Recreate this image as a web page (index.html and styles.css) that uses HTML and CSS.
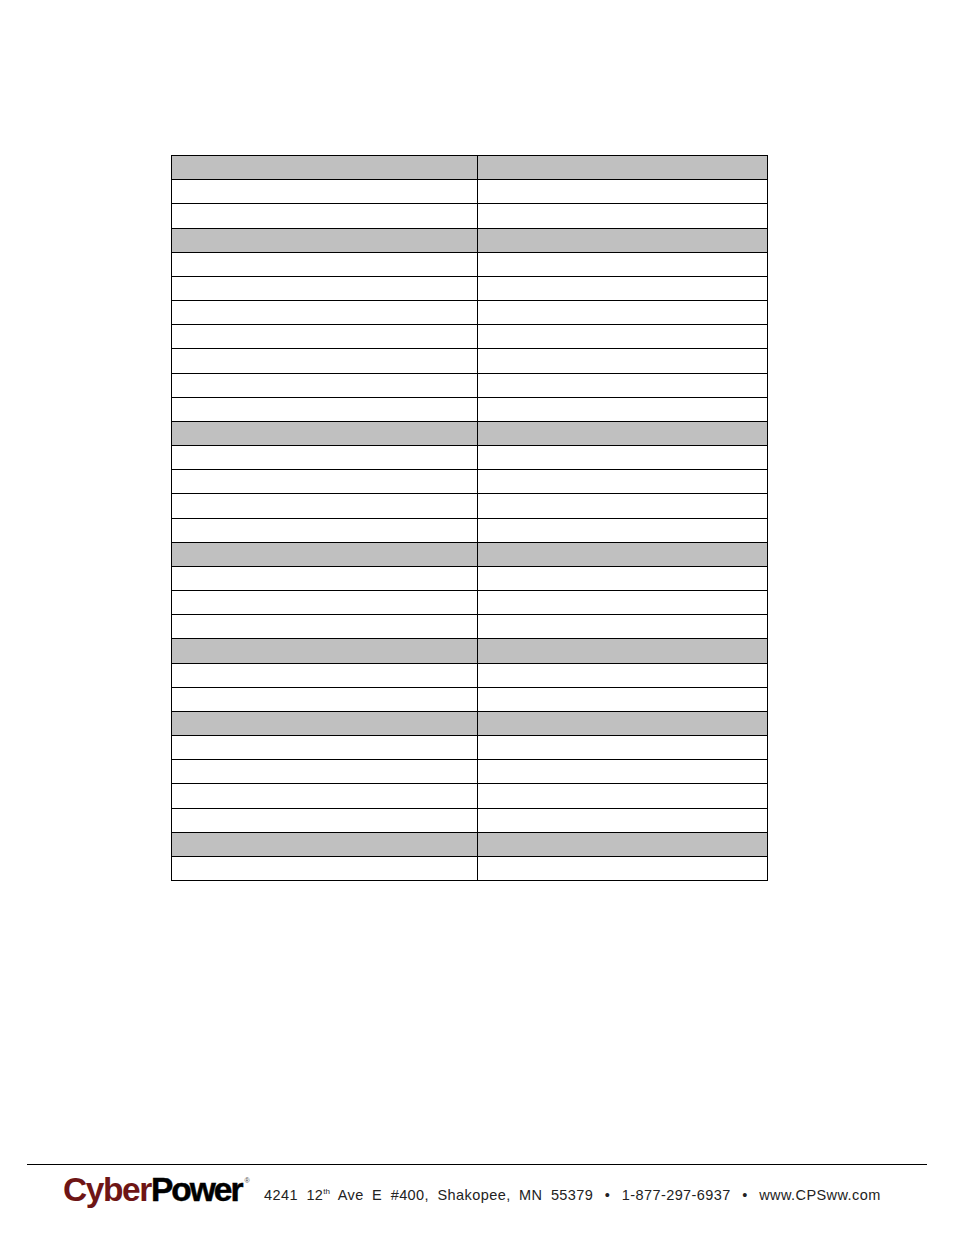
FILE: index.html
```
<!DOCTYPE html>
<html>
<head>
<meta charset="utf-8">
<link rel="stylesheet" href="styles.css">
</head>
<body>
<div class="page">
  <div class="spec-table">
    <div class="cell head"></div><div class="cell head"></div>
    <div class="cell"></div><div class="cell"></div>
    <div class="cell"></div><div class="cell"></div>
    <div class="cell head"></div><div class="cell head"></div>
    <div class="cell"></div><div class="cell"></div>
    <div class="cell"></div><div class="cell"></div>
    <div class="cell"></div><div class="cell"></div>
    <div class="cell"></div><div class="cell"></div>
    <div class="cell"></div><div class="cell"></div>
    <div class="cell"></div><div class="cell"></div>
    <div class="cell"></div><div class="cell"></div>
    <div class="cell head"></div><div class="cell head"></div>
    <div class="cell"></div><div class="cell"></div>
    <div class="cell"></div><div class="cell"></div>
    <div class="cell"></div><div class="cell"></div>
    <div class="cell"></div><div class="cell"></div>
    <div class="cell head"></div><div class="cell head"></div>
    <div class="cell"></div><div class="cell"></div>
    <div class="cell"></div><div class="cell"></div>
    <div class="cell"></div><div class="cell"></div>
    <div class="cell head"></div><div class="cell head"></div>
    <div class="cell"></div><div class="cell"></div>
    <div class="cell"></div><div class="cell"></div>
    <div class="cell head"></div><div class="cell head"></div>
    <div class="cell"></div><div class="cell"></div>
    <div class="cell"></div><div class="cell"></div>
    <div class="cell"></div><div class="cell"></div>
    <div class="cell"></div><div class="cell"></div>
    <div class="cell head"></div><div class="cell head"></div>
    <div class="cell"></div><div class="cell"></div>
  </div>

  <footer class="footer">
    <div class="rule"></div>
    <div class="footer-row">
      <div class="logo"><span class="cyber">Cyber</span><span class="power">Power</span><span class="reg">®</span></div>
      <div class="address">4241 12<sup>th</sup> Ave E #400, Shakopee, MN 55379 <span class="dot">•</span> 1-877-297-6937 <span class="dot">•</span> www.CPSww.com</div>
    </div>
  </footer>
</div>
</body>
</html>
```

FILE: styles.css
```
html, body {
  margin: 0;
  padding: 0;
  background: #fff;
}

.page {
  width: 954px;
  height: 1235px;
  font-family: "Liberation Sans", Arial, sans-serif;
}

.page::before {
  content: "";
  display: block;
  height: 0.1px;
}

.spec-table {
  margin-left: 171px;
  margin-top: 155px;
  width: 597px;
  height: 726px;
  box-sizing: border-box;
  display: grid;
  grid-template-columns: 305px 1fr;
  grid-template-rows: repeat(30, 1fr);
  gap: 1px;
  padding: 1px;
  background: #000;
}

.cell {
  background: #fff;
}

.cell.head {
  background: #c0c0c0;
}

.footer {
  margin-top: 283px;
}

.rule {
  margin-left: 27px;
  width: 900px;
  height: 1px;
  background: #000;
}

.footer-row {
  display: flex;
  align-items: baseline;
  padding-left: 63px;
  margin-top: -4px;
}

.logo {
  font-size: 33.5px;
  line-height: 40px;
  white-space: nowrap;
  width: 184px;
}

.cyber {
  color: #6e1515;
  font-weight: bold;
  letter-spacing: -1.4px;
}

.power {
  color: #000;
  font-weight: bold;
  letter-spacing: -2px;
  -webkit-text-stroke: 0.5px #000;
}

.reg {
  font-size: 7px;
  vertical-align: 18px;
  margin-left: 3px;
  color: #444;
}

.address {
  margin-left: 17px;
  font-size: 14.5px;
  letter-spacing: 0.42px;
  word-spacing: 4px;
  color: #222;
  white-space: nowrap;
  position: relative;
  top: -1px;
}

.address .dot {
  margin: 0 3px;
}

.address sup {
  font-size: 8px;
  vertical-align: 6px;
  line-height: 0;
  letter-spacing: 0;
}
```
